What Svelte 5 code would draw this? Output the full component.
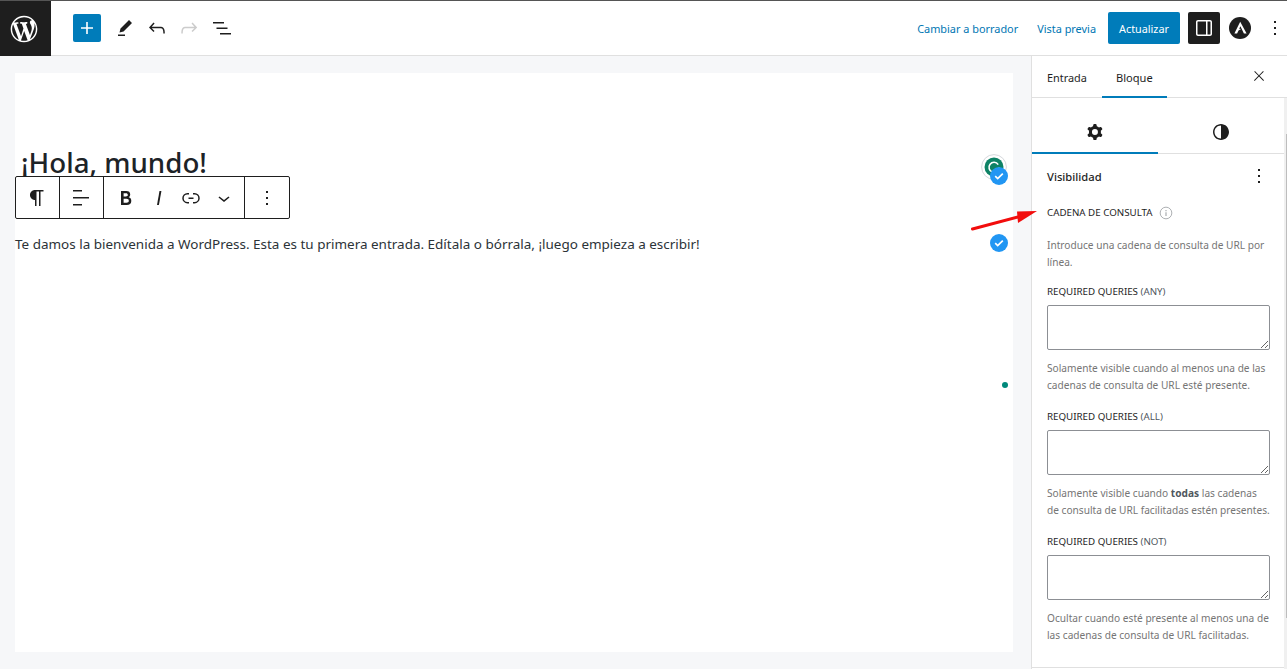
<script>
  const linkIcon = 'M10 17.389H8.444A5.194 5.194 0 1 1 8.444 7H10v1.5H8.444a3.694 3.694 0 0 0 0 7.389H10v1.5ZM14 7h1.556a5.194 5.194 0 0 1 0 10.39H14v-1.5h1.556a3.694 3.694 0 0 0 0-7.39H14V7Zm-4.5 6h5v-1.5h-5V13Z';
  const more = 'M13 19h-2v-2h2v2zm0-6h-2v-2h2v2zm0-6h-2V5h2v2z';

  const queries = [
    { label: 'ANY', help: 'Solamente visible cuando al menos una de las cadenas de consulta de URL esté presente.' },
    { label: 'ALL', before: 'Solamente visible cuando ', strong: 'todas', help: ' las cadenas de consulta de URL facilitadas estén presentes.' },
    { label: 'NOT', help: 'Ocultar cuando esté presente al menos una de las cadenas de consulta de URL facilitadas.' }
  ];
</script>

<div class="page">
  <header class="topbar">
    <div class="logo">
      <svg viewBox="-2 -2 24 24" width="32" height="32"><path fill="#fff" d="M20 10c0-5.51-4.49-10-10-10C4.48 0 0 4.49 0 10c0 5.52 4.48 10 10 10 5.51 0 10-4.48 10-10zM7.78 15.37L4.37 6.22c.55-.02 1.17-.08 1.17-.08.5-.06.44-1.13-.06-1.11 0 0-1.45.11-2.37.11-.18 0-.37 0-.58-.01C4.12 2.69 6.87 1.11 10 1.11c2.33 0 4.45.87 6.05 2.34-.68-.11-1.65.39-1.65 1.58 0 .74.45 1.36.9 2.1.35.61.55 1.36.55 2.46 0 1.49-1.4 5-1.4 5l-3.03-8.37c.54-.02.82-.17.82-.17.5-.05.44-1.25-.06-1.22 0 0-1.44.12-2.38.12-.87 0-2.33-.12-2.33-.12-.5-.03-.56 1.2-.06 1.22l.92.08 1.26 3.41zM17.41 10c.24-.64.74-1.87.43-4.25.7 1.29 1.05 2.71 1.05 4.25 0 3.29-1.73 6.24-4.4 7.78.97-2.59 1.94-5.2 2.92-7.78zM6.1 18.09C3.12 16.65 1.11 13.53 1.11 10c0-1.3.23-2.48.72-3.59C3.25 10.3 4.67 14.2 6.1 18.09zm4.03-6.63l2.58 6.98c-.86.29-1.76.45-2.71.45-.79 0-1.57-.11-2.29-.33.81-2.38 1.62-4.74 2.42-7.1z"/></svg>
    </div>
    <div class="tools">
      <button class="add"><svg viewBox="0 0 24 24" width="24" height="24"><path fill="#fff" d="M18 11.2h-5.2V6h-1.6v5.2H6v1.6h5.2V18h1.6v-5.2H18z"/></svg></button>
      <button class="tool"><svg viewBox="0 0 24 24" width="24" height="24"><path d="m19 7-3-3-8.5 8.5-1 4 4-1L19 7Zm-7 11.5H5V20h7v-1.5Z"/></svg></button>
      <button class="tool"><svg viewBox="0 0 24 24" width="24" height="24"><path d="M18.3 11.7c-.6-.6-1.4-.9-2.3-.9H6.7l2.9-3.3-1.1-1-4.5 5L8.5 16l1-1-2.7-2.7H16c.5 0 .9.2 1.3.5 1 1 1 3.4 1 4.5v.3h1.5v-.2c0-1.5 0-4.3-1.5-5.7z"/></svg></button>
      <button class="tool off"><svg viewBox="0 0 24 24" width="24" height="24"><path d="M15.6 6.5l-1.1 1 2.9 3.3H8c-.9 0-1.7.3-2.3.9-1.4 1.5-1.4 4.2-1.4 5.6v.2h1.5v-.3c0-1.1 0-3.5 1-4.5.3-.3.7-.5 1.3-.5h9.2L14.5 15l1.1 1.1 4.6-4.6-4.6-5z"/></svg></button>
      <button class="tool list"><svg viewBox="0 0 24 24" width="24" height="24"><path d="M3 6h11v1.5H3V6Zm3.5 5.5h11V13h-11v-1.5ZM21 17H10v1.5h11V17Z"/></svg></button>
    </div>
    <div class="actions">
      <span class="link draft">Cambiar a borrador</span>
      <span class="link preview">Vista previa</span>
      <button class="update">Actualizar</button>
      <button class="panel"><svg viewBox="0 0 24 24" width="24" height="24"><path fill="#fff" d="M18 4H6c-1.1 0-2 .9-2 2v12c0 1.1.9 2 2 2h12c1.1 0 2-.9 2-2V6c0-1.1-.9-2-2-2zm-4 14.5H6c-.3 0-.5-.2-.5-.5V6c0-.3.2-.5.5-.5h8v13zm4.5-.5c0 .3-.2.5-.5.5h-2.5v-13H18c.3 0 .5.2.5.5v12z"/></svg></button>
      <svg class="astra" viewBox="0 0 22 22" width="22" height="22"><circle cx="11" cy="11" r="11" fill="#1e1e1e"/><path fill="#fff" d="M11.2 4.8 5.4 16.4h2.7l1.4-2.9 2.6-1.4-1.9-.3 1.2-2.6 3.5 7.2h2.7z"/></svg>
      <button class="tool dots"><svg viewBox="0 0 24 24" width="24" height="24"><path d={more}/></svg></button>
    </div>
  </header>

  <div class="body">
    <main class="canvas-wrap">
      <div class="canvas">
        <h1>¡Hola, mundo!</h1>
        <div class="block-toolbar">
          <div class="group single"><svg viewBox="0 0 24 24" width="24" height="24"><path d="m9.99609 14v-.2251l.00391.0001v6.225h1.5v-14.5h2.5v14.5h1.5v-14.5h3v-1.5h-8.50391c-2.76142 0-5 2.23858-5 5 0 2.7614 2.23858 5 5 5z"/></svg></div>
          <div class="group single"><svg viewBox="0 0 24 24" width="24" height="24"><path d="M13 5.5H4V4h9v1.5Zm7 7H4V11h16v1.5Zm-7 7H4V18h9v1.5Z"/></svg></div>
          <div class="group format">
            <svg viewBox="0 0 24 24" width="24" height="24"><path d="M14.7 11.3c1-.6 1.5-1.6 1.5-3 0-2.3-1.3-3.4-4-3.4H7v14h5.8c1.4 0 2.5-.3 3.3-1 .8-.7 1.2-1.7 1.2-2.9.1-1.9-.8-3.1-2.6-3.7zm-5.1-4h2.3c.6 0 1.1.1 1.4.4.3.3.5.7.5 1.2s-.2 1-.5 1.2c-.3.3-.8.4-1.4.4H9.6V7.3zm4.6 9c-.4.3-1 .4-1.7.4H9.6v-3.9h2.9c.7 0 1.3.2 1.7.5.4.3.6.8.6 1.5s-.2 1.2-.6 1.5z"/></svg>
            <svg viewBox="0 0 24 24" width="24" height="24"><path d="M12.5 5L10 19h1.9l2.5-14z"/></svg>
            <svg viewBox="0 0 24 24" width="24" height="24"><path d={linkIcon}/></svg>
            <svg viewBox="0 0 24 24" width="24" height="24"><path d="M17.5 11.6L12 16l-5.5-4.4.9-1.2L12 14l4.5-3.6 1 1.2z"/></svg>
          </div>
          <div class="group single last"><svg viewBox="0 0 24 24" width="24" height="24"><path d={more}/></svg></div>
        </div>
        <p>Te damos la bienvenida a WordPress. Esta es tu primera entrada. Edítala o bórrala, ¡luego empieza a escribir!</p>
      </div>

      <svg class="grammarly" viewBox="0 0 26 26" width="26" height="26"><circle cx="13" cy="13" r="12.4" fill="#fff" stroke="#d5d8dc"/><circle cx="13" cy="13" r="9.5" fill="#0e8265"/><path d="M17.2 10.6A5 5 0 1 0 18 13.4" fill="none" stroke="#fff" stroke-width="1.6"/></svg>
      <span class="check first"><svg viewBox="0 0 18 18" width="18" height="18"><path d="M5.2 9.2 7.7 11.6 12.8 6.6" fill="none" stroke="#fff" stroke-width="1.7"/></svg></span>
      <span class="check second"><svg viewBox="0 0 18 18" width="18" height="18"><path d="M5.2 9.2 7.7 11.6 12.8 6.6" fill="none" stroke="#fff" stroke-width="1.7"/></svg></span>
      <span class="dot"></span>
    </main>

    <aside class="sidebar">
      <div class="tabs">
        <span class="tab">Entrada</span>
        <span class="tab active">Bloque</span>
        <svg class="close" viewBox="0 0 24 24" width="16" height="16"><path d="M13 11.8l6.1-6.3-1-1-6.1 6.2-6.1-6.2-1 1 6.1 6.3-6.5 6.7 1 1 6.5-6.6 6.5 6.6 1-1z"/></svg>
      </div>
      <div class="scroll-area">
        <div class="content">
          <div class="subtabs">
            <div class="subtab active"><svg viewBox="0 0 24 24" width="24" height="24"><path fill-rule="evenodd" d="M10.289 4.836A1 1 0 0 1 11.275 4h1.306a1 1 0 0 1 .987.836l.244 1.466c.787.26 1.503.679 2.108 1.218l1.393-.522a1 1 0 0 1 1.216.437l.653 1.13a1 1 0 0 1-.23 1.273l-1.148.944a6.025 6.025 0 0 1 0 2.435l1.149.946a1 1 0 0 1 .23 1.272l-.653 1.13a1 1 0 0 1-1.216.437l-1.394-.522c-.605.54-1.32.958-2.108 1.218l-.244 1.466a1 1 0 0 1-.987.836h-1.306a1 1 0 0 1-.986-.836l-.244-1.466a5.995 5.995 0 0 1-2.108-1.218l-1.394.522a1 1 0 0 1-1.217-.436l-.653-1.131a1 1 0 0 1 .23-1.272l1.149-.946a6.026 6.026 0 0 1 0-2.435l-1.148-.944a1 1 0 0 1-.23-1.272l.653-1.131a1 1 0 0 1 1.217-.437l1.393.522a5.994 5.994 0 0 1 2.108-1.218l.244-1.466ZM14.929 12a3 3 0 1 1-6 0 3 3 0 0 1 6 0Z"/></svg></div>
            <div class="subtab"><svg viewBox="0 0 24 24" width="24" height="24"><path d="M12 4c-4.4 0-8 3.6-8 8s3.6 8 8 8 8-3.6 8-8-3.6-8-8-8zm0 14.5c-3.6 0-6.5-2.9-6.5-6.5S8.4 5.5 12 5.5v13z"/></svg></div>
          </div>
          <section class="panel-body">
            <div class="panel-head">
              <h2>Visibilidad</h2>
              <svg viewBox="0 0 24 24" width="24" height="24"><path d={more}/></svg>
            </div>
            <div class="field-title">
              <span>CADENA DE CONSULTA</span>
              <svg viewBox="0 0 24 24" width="14" height="14"><circle cx="12" cy="12" r="10" fill="none" stroke="#a7aaad" stroke-width="1.6"/><path fill="#a7aaad" d="M11 10.5h2V17h-2zM11 7h2v2h-2z"/></svg>
            </div>
            <p class="intro">Introduce una cadena de consulta de URL por línea.</p>
            {#each queries as q}
              <div class="query">
                <div class="query-label">REQUIRED QUERIES <span>({q.label})</span></div>
                <textarea></textarea>
                <p class="help">{#if q.strong}{q.before}<strong>{q.strong}</strong>{/if}{q.help}</p>
              </div>
            {/each}
          </section>
        </div>
        <div class="track"><div class="thumb"></div></div>
      </div>
    </aside>
  </div>

  <svg class="arrow" viewBox="0 0 66 24" width="66" height="24"><path d="M1.5 21 L47 9" stroke="#f20d0d" stroke-width="3" stroke-linecap="round" fill="none"/><path d="M66 3 L46 3.5 L47 15 Z" fill="#f20d0d"/></svg>
</div>

<style>
:global(body) {
  margin: 0;
  background: #f6f7f9;
  font-family: "Noto Sans", "Open Sans", sans-serif;
  color: #1e1e1e;
}

button {
  border: 0;
  padding: 0;
  background: none;
  font: inherit;
}

svg {
  display: block;
  fill: #1e1e1e;
}

.page {
  position: relative;
  width: 1287px;
  height: 669px;
  overflow: hidden;
}

.topbar {
  display: flex;
  align-items: center;
  height: 56px;
  box-sizing: border-box;
  background: #fff;
  border-top: 1px solid #555;
  border-bottom: 1px solid #e0e0e0;
}

.logo {
  display: flex;
  align-items: center;
  justify-content: center;
  width: 48px;
  height: 55px;
  margin-bottom: -1px;
  padding-right: 3px;
  background: #1e1e1e;
}

.tools {
  display: flex;
  align-items: center;
  margin-left: 22px;
}

.add {
  display: flex;
  align-items: center;
  justify-content: center;
  width: 28px;
  height: 28px;
  margin-right: 8px;
  border-radius: 2px;
  background: #007cba;
}

.tool {
  display: flex;
  align-items: center;
  justify-content: center;
  width: 32px;
  height: 32px;
}

.list {
  margin-left: 1px;
}

.off svg {
  fill: #ccc;
}

.actions {
  display: flex;
  align-items: center;
  margin-left: auto;
}

.link {
  font-size: 10.9px;
  color: #0076b3;
}

.preview {
  margin-left: 19px;
}

.update {
  width: 72px;
  height: 32px;
  margin-left: 12px;
  border-radius: 2px;
  background: #007cba;
  color: #fff;
  font-size: 10.8px;
}

.panel {
  display: flex;
  align-items: center;
  justify-content: center;
  width: 32px;
  height: 32px;
  margin-left: 8px;
  border-radius: 2px;
  background: #1e1e1e;
}

.astra {
  margin-left: 9px;
}

.dots {
  width: 24px;
  margin-left: 12px;
}

.body {
  display: flex;
  height: 613px;
}

.canvas-wrap {
  position: relative;
  flex: 1;
  padding: 17px 18px 17px 15px;
}

.canvas {
  height: 579px;
  background: #fff;
  padding-top: 71px;
  box-sizing: border-box;
}

h1 {
  margin: 0 0 0 6px;
  font-size: 27.7px;
  line-height: 36px;
  font-weight: 500;
  color: #1d2327;
}

.block-toolbar {
  position: relative;
  display: flex;
  width: 275px;
  height: 43px;
  margin-top: -4px;
  box-sizing: border-box;
  background: #fff;
  border: 1px solid #1e1e1e;
  border-radius: 2px;
}

.group {
  display: flex;
  align-items: center;
  justify-content: center;
  height: 100%;
  border-right: 1px solid #1e1e1e;
}

.single {
  width: 43px;
}

.format {
  width: 139px;
  padding-left: 2px;
  justify-content: space-evenly;
}

.last {
  width: 44px;
  border-right: 0;
}

.canvas p {
  margin: 15px 0 0;
  font-size: 13.47px;
  line-height: 20px;
  color: #2c3338;
}

.grammarly {
  position: absolute;
  left: 981px;
  top: 98px;
}

.check {
  position: absolute;
  left: 990px;
  width: 18px;
  height: 18px;
  border-radius: 50%;
  background: #2196f3;
}

.first {
  top: 111px;
}

.second {
  top: 178px;
}

.dot {
  position: absolute;
  left: 1002px;
  top: 326px;
  width: 6px;
  height: 6px;
  border-radius: 50%;
  background: #00897b;
}

.sidebar {
  width: 256px;
  box-sizing: border-box;
  background: #fff;
  border-left: 1px solid #e0e0e0;
}

.tabs {
  display: flex;
  align-items: center;
  position: relative;
  height: 41px;
  padding-left: 3px;
  border-bottom: 1px solid #e0e0e0;
}

.tab {
  display: flex;
  align-items: center;
  height: 100%;
  box-sizing: border-box;
  padding: 1px 12px 0;
  font-size: 10.9px;
  color: #1e1e1e;
}

.tab.active {
  margin-left: 3px;
  padding: 1px 14px 0;
  font-size: 11.1px;
  box-shadow: 0 1px 0 #007cba, inset 0 -1px 0 #007cba;
}

.close {
  position: absolute;
  left: 219px;
  top: 12px;
}

.scroll-area {
  display: flex;
  height: 571px;
}

.content {
  flex: 1;
  min-width: 0;
}

.track {
  width: 3px;
  background: #f0f0f0;
}

.thumb {
  width: 1px;
  height: 484px;
  margin: 36px 0 0 2px;
  background: #bdbdbd;
}

.subtabs {
  display: flex;
  height: 55px;
  border-bottom: 1px solid #e0e0e0;
}

.subtab {
  display: flex;
  flex: 1;
  align-items: center;
  justify-content: center;
  padding-top: 13px;
  box-sizing: border-box;
}

.subtab.active {
  box-shadow: 0 1px 0 #007cba, inset 0 -1px 0 #007cba;
}

.panel-body {
  box-sizing: border-box;
  height: 514px;
  padding: 0 14px 0 15px;
  border-bottom: 1px solid #e0e0e0;
}

.panel-head {
  display: flex;
  align-items: center;
  justify-content: space-between;
  height: 44px;
  margin-right: -1px;
}

h2 {
  margin: 0;
  font-size: 11.2px;
  font-weight: 500;
}

.field-title {
  display: flex;
  align-items: center;
  gap: 6px;
  margin-top: 5px;
  font-size: 9.75px;
  line-height: 20px;
}

.intro,
.help {
  margin: 0;
  font-size: 10.15px;
  line-height: 17px;
  color: #757575;
}

.intro {
  margin: 14px 0 -2px;
}

.query {
  margin-top: 14px;
}

.query-label {
  font-size: 9.75px;
  line-height: 18px;
}

.query-label span {
  color: #50575e;
}

textarea {
  display: block;
  width: 223px;
  height: 45px;
  margin-top: 4px;
  box-sizing: border-box;
  border: 1px solid #8c8f94;
  border-radius: 2px;
  background: #fff;
}

.help {
  margin-top: 10px;
}

.help strong {
  color: #50575e;
}

.arrow {
  position: absolute;
  left: 971px;
  top: 208px;
}
</style>
